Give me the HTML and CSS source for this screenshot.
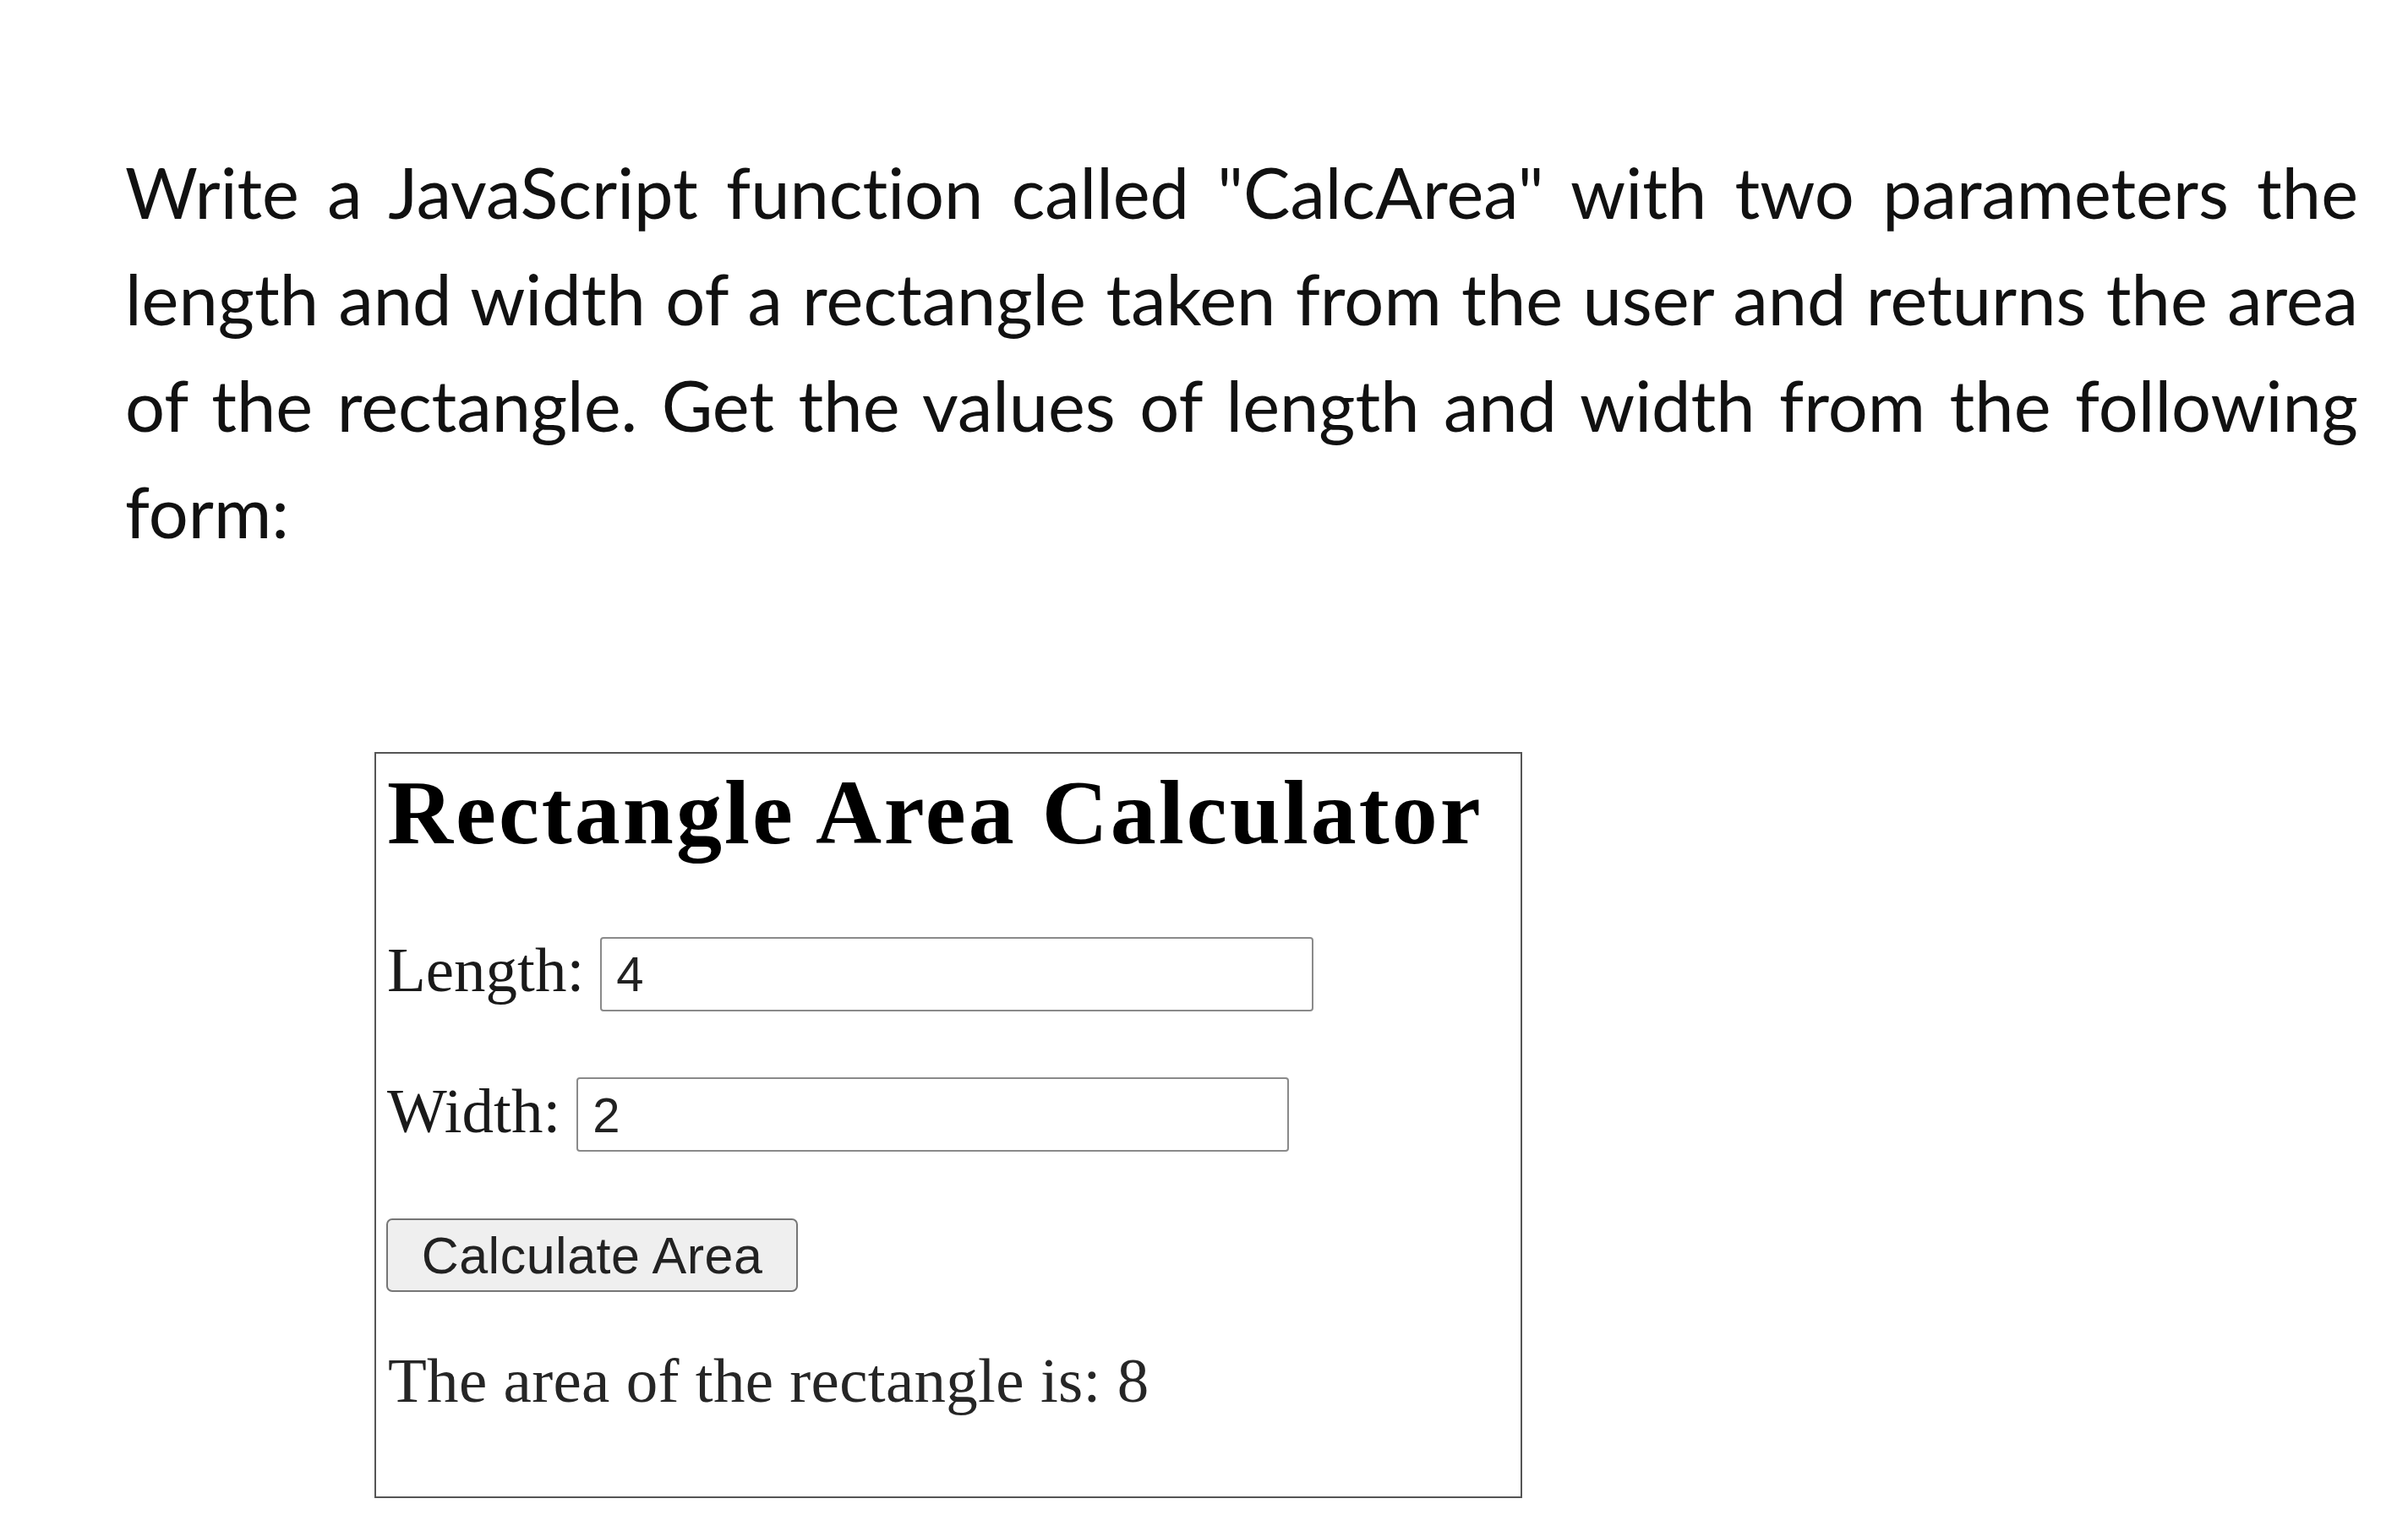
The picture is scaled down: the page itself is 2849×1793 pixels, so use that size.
FILE: index.html
```html
<!DOCTYPE html>
<html lang="en">
<head>
<meta charset="utf-8">
<title>CalcArea exercise</title>
<link rel="stylesheet" href="styles.css">
</head>
<body>
<p class="task">Write a JavaScript function called "CalcArea" with two parameters the length and width of a rectangle taken from the user and returns the area of the rectangle. Get the values of length and width from the following form:</p>
<div class="calc">
  <h2 class="calc-title">Rectangle Area Calculator</h2>
  <div class="calc-row calc-row-length">
    <label class="calc-label" for="len">Length:</label>
    <input class="calc-input calc-input-length" id="len" type="text" value="4">
  </div>
  <div class="calc-row calc-row-width">
    <label class="calc-label" for="wid">Width:</label>
    <input class="calc-input calc-input-width" id="wid" type="text" value="2">
  </div>
  <button class="calc-button" type="button">Calculate Area</button>
  <p class="calc-result">The area of the rectangle is: 8</p>
</div>
</body>
</html>
```
FILE: styles.css
```css
html, body {
  margin: 0;
  padding: 0;
  background: #ffffff;
}

body {
  width: 2849px;
  min-height: 1793px;
}

.task {
  margin: 164px 0 0 148px;
  width: 2642px;
  font-family: "Lato", "Noto Sans", sans-serif;
  font-size: 83px;
  line-height: 126px;
  color: #111111;
  text-align: justify;
  font-variant-ligatures: none;
  font-feature-settings: "liga" 0, "clig" 0;
}

.calc {
  margin: 222px 0 0 443px;
  width: 1358px;
  height: 883px;
  box-sizing: border-box;
  border: 2px solid #555555;
  padding: 5px 0 0 12px;
  display: flex;
  flex-direction: column;
  align-items: flex-start;
  font-family: "Liberation Serif", "Times New Roman", serif;
  color: #1a1a1a;
}

.calc-title {
  margin: 0;
  font-size: 108px;
  line-height: 130px;
  font-weight: bold;
  letter-spacing: 3px;
  color: #000000;
  padding-left: 1px;
}

.calc-row {
  display: flex;
  align-items: baseline;
  gap: 19px;
}

.calc-row-length {
  margin-top: 78px;
}

.calc-row-width {
  margin-top: 75px;
}

.calc-label {
  font-size: 75px;
  line-height: 86px;
  padding-left: 1px;
}

.calc-input {
  box-sizing: border-box;
  height: 88px;
  border: 2px solid #8a8a8a;
  border-radius: 4px;
  padding: 0 17px;
  margin: 0;
  font-family: "Liberation Sans", Arial, sans-serif;
  font-size: 58px;
  color: #222222;
  background: #ffffff;
  outline: none;
}

.calc-input-length {
  width: 844px;
}

.calc-input-width {
  width: 843px;
}

.calc-button {
  margin-top: 79px;
  width: 487px;
  height: 87px;
  box-sizing: border-box;
  border: 2px solid #767676;
  border-radius: 7px;
  background: #efefef;
  padding: 0;
  font-family: "Liberation Sans", Arial, sans-serif;
  font-size: 61px;
  color: #222222;
  letter-spacing: 0.5px;
}

.calc-result {
  margin: 62px 0 0 0;
  font-size: 75px;
  line-height: 86px;
  padding-left: 2px;
  letter-spacing: 0.3px;
  color: #262626;
}
```
